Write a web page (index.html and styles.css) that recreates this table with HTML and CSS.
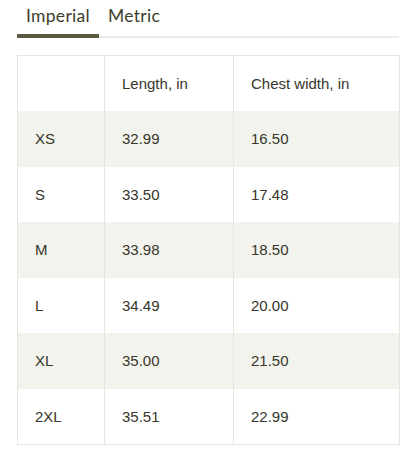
FILE: index.html
```html
<!DOCTYPE html>
<html>
<head>
<meta charset="utf-8">
<link rel="stylesheet" href="styles.css">
</head>
<body>
<div class="wrap">
  <div class="tabs">
    <div class="tab active">Imperial</div>
    <div class="tab">Metric</div>
  </div>
  <table class="sizes">
    <colgroup><col class="c1"><col class="c2"><col class="c3"></colgroup>
    <tr><td></td><td>Length, in</td><td>Chest width, in</td></tr>
    <tr class="alt"><td>XS</td><td>32.99</td><td>16.50</td></tr>
    <tr><td>S</td><td>33.50</td><td>17.48</td></tr>
    <tr class="alt"><td>M</td><td>33.98</td><td>18.50</td></tr>
    <tr><td>L</td><td>34.49</td><td>20.00</td></tr>
    <tr class="alt"><td>XL</td><td>35.00</td><td>21.50</td></tr>
    <tr><td>2XL</td><td>35.51</td><td>22.99</td></tr>
  </table>
</div>
</body>
</html>
```
FILE: styles.css
```css
html, body { margin: 0; padding: 0; background: #fff; }
body { font-family: "Liberation Sans", Arial, sans-serif; color: #36362a; }
.wrap { padding: 0 17px 0 17px; width: 382px; }
.tabs {
  display: flex;
  height: 38px;
  border-bottom: 2px solid #ecebe5;
  box-sizing: border-box;
}
.tab {
  font-family: "Lato", "Liberation Sans", sans-serif;
  font-size: 17.5px;
  padding: 5px 9px 0 9px;
  color: #3d3d2c;
  letter-spacing: 0.3px;
}
.tab.active {
  border-bottom: 4px solid #5c5a42;
  margin-bottom: -2px;
  width: 64px;
}
.sizes {
  margin-top: 17px;
  width: 382px;
  border-collapse: collapse;
  border: 1px solid #e6e5df;
  table-layout: fixed;
  font-size: 15px;
}
.c1 { width: 87px; }
.c2 { width: 129px; }
.c3 { width: 166px; }
.sizes td {
  height: 55.5px;
  padding: 0 0 0 17px;
  border-left: 1px solid #e6e5df;
  vertical-align: middle;
  box-sizing: border-box;
}
.sizes tr.alt td { background: #f3f3ee; }
```
